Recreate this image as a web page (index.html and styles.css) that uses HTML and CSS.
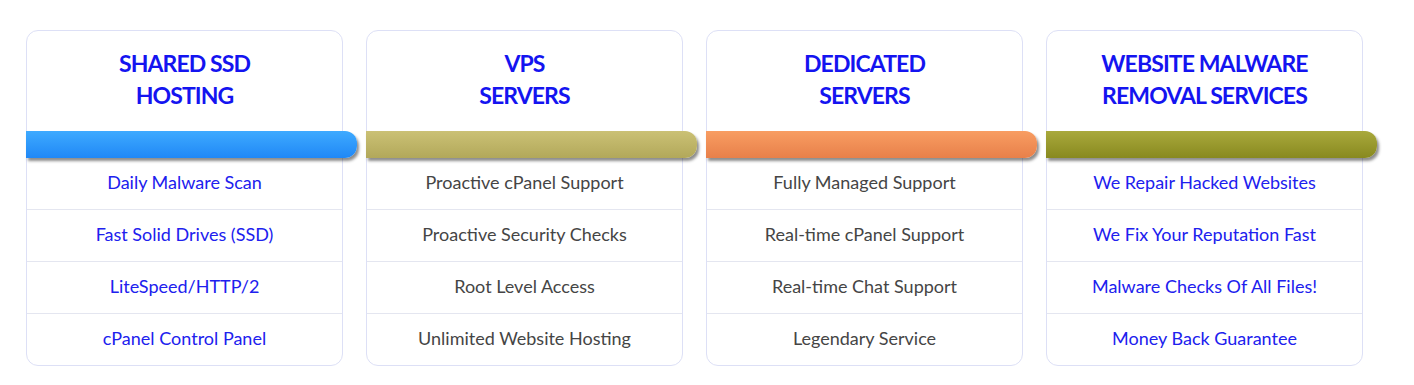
FILE: index.html
```html
<!DOCTYPE html>
<html>
<head>
<meta charset="utf-8">
<link rel="stylesheet" href="styles.css">
</head>
<body>
<div class="plans">
  <div class="card">
    <div class="head"><h2>SHARED SSD<br>HOSTING</h2></div>
    <div class="ribbon blue"></div>
    <ul class="rows link">
      <li>Daily Malware Scan</li>
      <li>Fast Solid Drives (SSD)</li>
      <li>LiteSpeed/HTTP/2</li>
      <li>cPanel Control Panel</li>
    </ul>
  </div>
  <div class="card">
    <div class="head"><h2>VPS<br>SERVERS</h2></div>
    <div class="ribbon khaki"></div>
    <ul class="rows">
      <li>Proactive cPanel Support</li>
      <li>Proactive Security Checks</li>
      <li>Root Level Access</li>
      <li>Unlimited Website Hosting</li>
    </ul>
  </div>
  <div class="card">
    <div class="head"><h2>DEDICATED<br>SERVERS</h2></div>
    <div class="ribbon orange"></div>
    <ul class="rows">
      <li>Fully Managed Support</li>
      <li>Real-time cPanel Support</li>
      <li>Real-time Chat Support</li>
      <li>Legendary Service</li>
    </ul>
  </div>
  <div class="card">
    <div class="head"><h2>WEBSITE MALWARE<br>REMOVAL SERVICES</h2></div>
    <div class="ribbon olive"></div>
    <ul class="rows link">
      <li>We Repair Hacked Websites</li>
      <li>We Fix Your Reputation Fast</li>
      <li>Malware Checks Of All Files!</li>
      <li>Money Back Guarantee</li>
    </ul>
  </div>
</div>
</body>
</html>
```

FILE: styles.css
```css
* { box-sizing: border-box; }
html, body { margin: 0; padding: 0; background: #fff; }
body { font-family: "Lato", "Liberation Sans", sans-serif; }
.plans {
  display: flex;
  gap: 23px;
  padding: 30px 0 0 26px;
}
.card {
  width: 317px;
  border: 1px solid #dde0f6;
  border-radius: 12px;
  background: #fff;
}
.head {
  height: 100px;
  padding-top: 16px;
  text-align: center;
}
.head h2 {
  margin: 0;
  font-size: 23px;
  line-height: 32px;
  font-weight: 700;
  color: #1414f0;
  letter-spacing: -0.9px;
}
.ribbon {
  margin-left: -1px;
  width: 331px;
  height: 27px;
  border-radius: 0 12px 12px 0;
  box-shadow: 2px 3px 3px rgba(0,0,0,0.45);
  position: relative;
}
.blue { background: linear-gradient(#3eaaff, #2088f6); }
.khaki { background: linear-gradient(#cbc175, #b2a85a); }
.orange { background: linear-gradient(#f89d62, #e8804a); }
.olive { background: linear-gradient(#a9a93c, #88891f); }
.rows {
  list-style: none;
  margin: 0;
  padding: 0;
}
.rows li {
  height: 52px;
  display: flex;
  align-items: center;
  justify-content: center;
  padding-bottom: 4px;
  border-top: 1px solid #e4e6f0;
  font-size: 18px;
  color: #454545;
}
.rows li:first-child { border-top: none; height: 51px; }
.rows.link li { color: #2020ee; }
```
